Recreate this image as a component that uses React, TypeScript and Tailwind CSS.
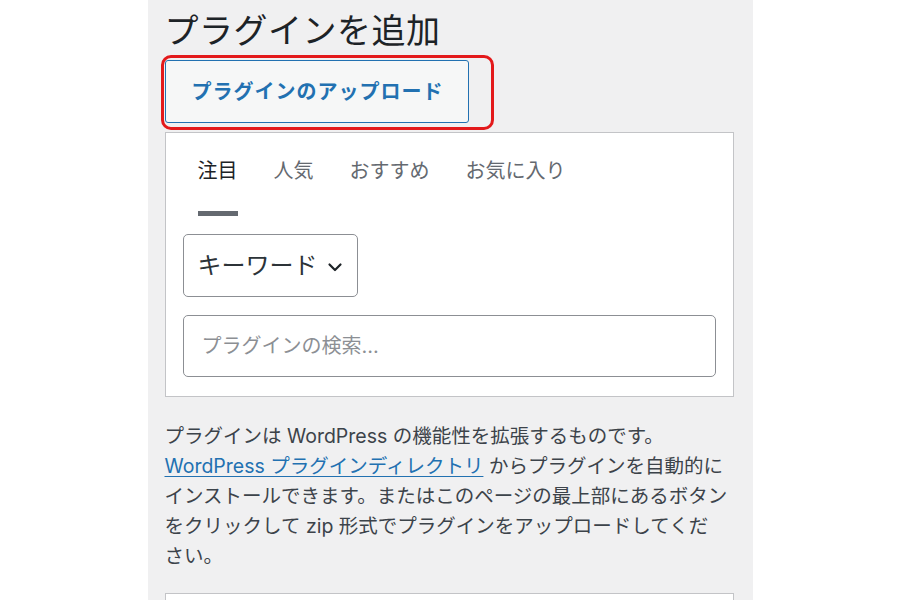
import React from "react";

const font = "font-['Inter','Noto_Sans_CJK_JP',sans-serif]";

interface TabProps {
  label: string;
  active?: boolean;
}

const Tab: React.FC<TabProps> = ({ label, active }) => {
  return (
    <li
      className={`pb-[26px] text-[20px] leading-[28px] border-b-[5px] ${
        active ? "text-[#1d2327] border-[#646970]" : "text-[#646970] border-transparent"
      }`}
    >
      {label}
    </li>
  );
};

const App: React.FC = () => {
  return (
    <div className={`flex justify-center bg-white min-h-[600px] overflow-hidden ${font}`}>
      <div className="w-[605px] h-[600px] bg-[#f0f0f1] pl-[17px] pr-[19px] pt-[11px] overflow-hidden">
        {/* Title */}
        <h1 className="text-[34px] leading-[40px] font-normal text-[#1d2327] tracking-[0.5px]">プラグインを追加</h1>

        {/* Upload button with red annotation */}
        <div className="relative mt-[9px] w-[304px]">
          <button className="w-[304px] h-[63px] bg-[#f6f7f7] border border-[#2271b1] rounded-[3px] text-[#2271b1] text-[20px] font-bold tracking-[1px] pl-[2px]">
            プラグインのアップロード
          </button>
          <div className="absolute -top-[5px] -left-[4px] w-[333px] h-[75px] border-[3px] border-[#e3191b] rounded-[10px] pointer-events-none"></div>
        </div>

        {/* Search card */}
        <div className="mt-[9px] bg-white border border-[#c3c4c7] px-[17px] pt-[24px] pb-[19px]">
          <ul className="flex gap-[36px] ml-[15px]">
            <Tab label="注目" active />
            <Tab label="人気" />
            <Tab label="おすすめ" />
            <Tab label="お気に入り" />
          </ul>

          <div className="mt-[18px] w-[175px] h-[63px] border border-[#8c8f94] rounded-[5px] flex items-center pl-[14px] gap-[8px] text-[24px] text-[#2c3338]">
            <span>キーワード</span>
            <svg width="18" height="18" viewBox="0 0 18 18" fill="none" className="mt-[2px]">
              <path d="M3.5 6.5l5.5 5.5 5.5-5.5" stroke="#1d2327" strokeWidth="2.2" strokeLinecap="round" strokeLinejoin="round" />
            </svg>
          </div>

          <input
            type="text"
            placeholder="プラグインの検索..."
            className="mt-[18px] block w-[533px] h-[62px] border border-[#8c8f94] rounded-[5px] px-[18px] text-[20px] text-[#2c3338] placeholder:text-[#8c8f94] bg-white outline-none"
          />
        </div>

        {/* Description */}
        <p className="mt-[24px] text-[19.5px] leading-[30px] text-[#3c434a] whitespace-nowrap">
          プラグインは WordPress の機能性を拡張するものです。
          <br />
          <a href="#" className="text-[#2271b1] underline underline-offset-[3px]">
            WordPress プラグインディレクトリ
          </a>{" "}
          からプラグインを自動的に
          <br />
          インストールできます。またはこのページの最上部にあるボタン
          <br />
          をクリックして zip 形式でプラグインをアップロードしてくだ
          <br />
          さい。
        </p>

        {/* Next card (cut off) */}
        <div className="mt-[22px] h-[80px] bg-white border border-[#c3c4c7]"></div>
      </div>
    </div>
  );
};

export default App;
